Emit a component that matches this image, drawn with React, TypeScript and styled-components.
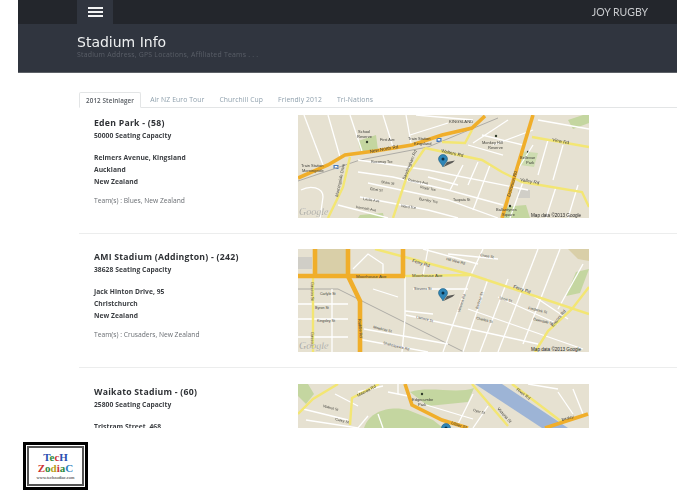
import React from "react";
import styled, { createGlobalStyle } from "styled-components";

const Global = createGlobalStyle`
  html, body { margin: 0; padding: 0; background: #fff; overflow: hidden; }
  body { font-family: "Open Sans", "Liberation Sans", sans-serif; }
`;
const Page = styled.div`
  width: 695px; height: 494px; display: flex; flex-direction: column; overflow: hidden;
  filter: blur(0.45px);
`;
const Header = styled.header`
  margin: 0 18px; width: 659px; height: 72px; background: #30353f;
  border-bottom: 1px solid #5d6167; box-sizing: content-box; flex: none;
`;
const TopBar = styled.div`
  height: 24px; background: #23262c; padding: 0 29px 0 59px; display: flex; align-items: center; justify-content: space-between;
`;
const MenuCell = styled.div`
  width: 36px; height: 24px; background: #30353f; display: flex; flex-direction: column; gap: 2px; align-items: center; justify-content: center;
`;
const MenuBar = styled.span`
  width: 15px; height: 2px; background: #f2f3f4;
`;
const Brand = styled.div`
  font-family: "Lato", sans-serif; font-size: 10.5px; color: #c9cbce;
`;
const TitleBlock = styled.div`
  padding: 9px 0 0 59px;
`;
const Title = styled.h1`
  margin: 0; font-family: "DejaVu Sans", sans-serif; font-weight: 400; font-size: 14px; line-height: 18px; color: #eef0f1;
`;
const Subtitle = styled.p`
  margin: -1px 0 0; font-size: 6.9px; line-height: 10px; color: #5a5f68; letter-spacing: 0.22px;
`;
const Content = styled.main`
  margin: 19px 18px 0 79px; flex: none; height: 336px; display: flex; flex-direction: column;
`;
const Tabs = styled.nav`
  display: flex; height: 15px; border-bottom: 1px solid #e3e5e6; flex: none; gap: 15px;
`;
const Tab = styled.div<{ $active?: boolean }>`
  box-sizing: border-box; line-height: 16px; letter-spacing: 0.1px; background: #fff;
  color: ${(p) => (p.$active ? "#555a60" : "#8fa0ad")};
  font-weight: ${(p) => (p.$active ? 600 : 400)};
  font-size: ${(p) => (p.$active ? "6.3px" : "6.8px")};
  ${(p) => (p.$active
    ? "border: 1px solid #e3e5e6; border-bottom-color: #fff; height: 16px; padding: 0 6px; border-radius: 2px 2px 0 0; margin-right: -6px;"
    : "height: 15px; padding: 0;")}
`;
const Pane = styled.div`
  flex: 1; overflow: hidden; padding-top: 7px;
`;
const Row = styled.article`
  display: flex; height: 118px; margin-bottom: 15.3px; border-bottom: 1px solid #eceded;
  &:last-child { border-bottom: 0; }
`;
const Info = styled.div`
  width: 204px; margin-left: 15px; padding-top: 2px; flex: none; color: #33363a;
`;
const Name = styled.h2`
  margin: 0 0 1px; font-size: 8.7px; line-height: 12px; font-weight: 700; color: #2f3236; letter-spacing: 0.25px;
`;
const Detail = styled.div<{ $gap?: number }>`
  font-size: 6.7px; font-weight: 700; line-height: 12px; color: #3a3d41; margin-top: ${(p) => p.$gap ?? 0}px; white-space: nowrap; letter-spacing: 0.05px;
`;
const TeamLine = styled.div`
  margin-top: 7px; font-size: 6.7px; line-height: 12px; color: #6a6e73;
`;
const MapFrame = styled.div<{ $h: number }>`
  width: 291px; height: ${(p) => p.$h}px; flex: none; overflow: hidden; background: #e6e1d1;
  svg { display: block; }
`;
const LogoArea = styled.div`
  margin: 14px 0 0 23px; flex: none;
`;
const LogoOuter = styled.div`
  width: 65px; height: 48px; box-sizing: border-box; border: 3px solid #000; background: #fff; padding: 1px;
`;
const LogoInner = styled.div`
  width: 100%; height: 100%; box-sizing: border-box; border: 2px solid #555; background: #fff;
  display: flex; flex-direction: column; align-items: center; justify-content: center;
  font-family: "Liberation Serif", serif; font-weight: 700;
`;
const LogoLine = styled.div`
  font-size: 11px; line-height: 11px;
`;
const LogoUrl = styled.div`
  font-size: 4.4px; line-height: 7px; font-weight: 400; color: #111;
`;
const L = styled.span<{ $c: string }>`
  color: ${(p) => p.$c};
`;

type Label = { t: string; x: number; y: number; r?: number; s?: number };
type MapData = {
  h: number;
  base?: React.ReactNode;
  white: string[];
  grey?: string[];
  yellow: string[];
  orange: string[];
  orangeW: number;
  labels: Label[];
  pin: [number, number];
  foot: boolean;
};

const Pin = ({ x, y }: { x: number; y: number }) => (
  <g transform={`translate(${x} ${y})`}>
    <path d="M0.5 8 L4 3 L12 1.5 L9.5 3.8 Z" fill="#4a4a48" opacity="0.9" />
    <path d="M0 8 C-1 5 -4.5 3 -4.5 0 A4.5 4.5 0 0 1 4.5 0 C4.5 3 1 5 0 8 Z" fill="#2f86b8" stroke="#14506f" strokeWidth="0.5" />
    <circle cx="0" cy="0" r="1.5" fill="#0b2f45" />
  </g>
);

const Dot = ({ x, y }: { x: number; y: number }) => <circle cx={x} cy={y} r="1.2" fill="#2f3b2a" />;
const Station = ({ x, y }: { x: number; y: number }) => (
  <g>
    <rect x={x - 2.5} y={y - 2} width="5" height="4" fill="#3f77c0" />
    <rect x={x - 1.3} y={y - 1} width="2.6" height="1.6" fill="#fff" />
  </g>
);

const MapView = ({ d }: { d: MapData }) => (
  <MapFrame $h={d.h}>
    <svg width="291" height={d.h} viewBox={`0 0 291 ${d.h}`}>
      <rect width="291" height={d.h} fill="#e6e1d1" />
      {d.base}
      {(d.grey ?? []).map((p, i) => <path key={i} d={p} fill="none" stroke="#aeaca6" strokeWidth="1" />)}
      {d.white.map((p, i) => <path key={i} d={p} fill="none" stroke="#fff" strokeWidth="1.3" />)}
      {d.yellow.map((p, i) => <path key={i} d={p} fill="none" stroke="#f3e673" strokeWidth="2.4" />)}
      {d.orange.map((p, i) => <path key={i} d={p} fill="none" stroke="#f0ae2a" strokeWidth={d.orangeW} />)}
      {d.labels.map((l, i) => (
        <text key={i} x={l.x} y={l.y} fontFamily="Liberation Sans, sans-serif" fontSize={l.s ?? 4} fill="#3f3f3a"
          transform={l.r ? `rotate(${l.r} ${l.x} ${l.y})` : undefined}>{l.t}</text>
      ))}
      <Pin x={d.pin[0]} y={d.pin[1]} />
      {d.foot && (
        <>
          <text x="1" y="100" fontFamily="Liberation Serif, serif" fontStyle="italic" fontSize="10" fill="#8a8a85" stroke="#f2f0e8" strokeWidth="0.25">Google</text>
          <text x="233" y="102" fontFamily="Liberation Sans, sans-serif" fontSize="4.6" fill="#222">Map data ©2013 Google</text>
        </>
      )}
    </svg>
  </MapFrame>
);

const maps: MapData[] = [
  {
    h: 103,
    foot: true,
    orangeW: 3.6,
    pin: [145, 44],
    base: (
      <>
        <path d="M60 26 L78 20 L80 35 L63 38 Z" fill="#c4d6a0" />
        <path d="M222 36 L240 38 L236 52 L222 50 Z" fill="#cddcb0" />
        <path d="M270 5 L285 0 L291 0 L291 8 L275 14 Z" fill="#c4d6a0" />
        <path d="M205 92 L228 90 L232 103 L205 103 Z" fill="#c4d6a0" />
        <path d="M62 100 L85 98 L86 103 L60 103 Z" fill="#c4d6a0" />
        <path d="M220 75 L232 75 L232 83 L220 83 Z" fill="#d0cec7" />
        <Dot x={69} y={27} />
        <Dot x={198} y={21} />
        <Dot x={230} y={37} />
        <Dot x={212} y={91} />
        <Station x={141} y={25} />
        <Station x={38} y={52} />
      </>
    ),
    grey: ["M0 66 L62 45 L130 32 L200 3"],
    white: [
      "M6 0 L25 50", "M30 0 L42 42", "M52 0 L64 36", "M85 0 L95 32", "M108 0 L113 28", "M112 20 L150 8", "M118 0 L175 5",
      "M60 45 L130 55 L230 75", "M60 57 L95 62 L150 75 L205 90", "M70 68 L150 85 L200 103", "M62 82 L130 95 L160 103", "M40 90 L90 103",
      "M130 62 L160 70", "M165 50 L152 75", "M180 47 L170 70", "M192 50 L175 95", "M225 67 L212 103", "M258 72 L248 103", "M280 70 L270 103",
      "M3 75 C 12 70 25 72 25 82 L 22 103", "M175 28 L210 5", "M195 30 L235 15", "M235 30 L215 62", "M250 25 L240 60", "M265 30 L255 65", "M170 30 L205 40", "M240 5 L291 14", "M184 20 L225 30",
    ],
    yellow: [
      "M127 33 L184 45 L204 57 L224 67 L284 77 L291 92",
      "M127 33 L110 58 L95 103",
      "M234 22 L291 32",
      "M52 42 L45 72 L30 103",
      "M144 27 L167 28 L174 15",
    ],
    orange: [
      "M0 63 L30 50 L47 40 L77 36 L114 30 L144 20 L174 13 L187 1",
      "M235 0 L204 103",
    ],
    labels: [
      { t: "New North Rd", x: 72, y: 38, r: -10, s: 4.6 },
      { t: "Walters Rd", x: 143, y: 37, r: 13, s: 4.6 },
      { t: "Valley Rd", x: 222, y: 66, r: 10, s: 4.6 },
      { t: "View Rd", x: 254, y: 26, r: 11, s: 4.6 },
      { t: "Dominion Rd", x: 212, y: 82, r: -74, s: 4.6 },
      { t: "Sandringham Rd", x: 107, y: 65, r: -68, s: 4.2 },
      { t: "Morningside Drive", x: 40, y: 82, r: -78, s: 4.2 },
      { t: "KINGSLAND", x: 151, y: 8, s: 4.2 },
      { t: "School", x: 60, y: 18, s: 4 },
      { t: "Reserve", x: 59, y: 23, s: 4 },
      { t: "First Ave", x: 82, y: 26, s: 3.8 },
      { t: "Train Station", x: 110, y: 25, s: 4 },
      { t: "Kingsland", x: 116, y: 30, s: 4 },
      { t: "Train Station", x: 3, y: 52, s: 4 },
      { t: "Morningside", x: 4, y: 57, s: 4 },
      { t: "Monkey Hill", x: 184, y: 29, s: 4 },
      { t: "Reserve", x: 190, y: 34, s: 4 },
      { t: "Bellevue", x: 222, y: 44, s: 4 },
      { t: "Park", x: 228, y: 49, s: 4 },
      { t: "Ballantynes", x: 198, y: 96, s: 4 },
      { t: "Square", x: 204, y: 101, s: 4 },
      { t: "Rossmay Tce", x: 73, y: 48, s: 3.6 },
      { t: "Reimers Ave", x: 110, y: 66, r: 10, s: 3.6 },
      { t: "Royal Tce", x: 122, y: 73, r: 12, s: 3.6 },
      { t: "Burnley Tce", x: 121, y: 85, r: 10, s: 3.6 },
      { t: "Taupata St", x: 155, y: 86, s: 3.6 },
      { t: "Shaw St", x: 83, y: 68, r: 8, s: 3.6 },
      { t: "Ethel St", x: 72, y: 75, r: 8, s: 3.6 },
      { t: "Leslie Ave", x: 65, y: 85, r: 8, s: 3.6 },
      { t: "Ward Tce", x: 103, y: 92, r: 8, s: 3.6 },
      { t: "Kenneth Ave", x: 58, y: 93, r: 10, s: 3.6 },
    ],
  },
  {
    h: 103,
    foot: true,
    orangeW: 4.6,
    pin: [145, 44],
    base: (
      <>
        <rect x="19" y="0" width="30" height="25" fill="#d9cfa8" />
        <path d="M268 47 L278 23 L291 20 L282 44 Z" fill="#c4d6a0" />
        <path d="M270 0 L291 0 L291 12 L280 10 Z" fill="#d9cfa8" />
        <rect x="0" y="8" width="14" height="12" fill="#d0cec7" />
      </>
    ),
    grey: ["M0 40 L40 40 L166 103"],
    white: [
      "M115 40 L170 40", "M107 27 L107 70 L104 103", "M75 40 L100 48", "M107 62 L135 65", "M108 66 L240 95", "M0 55 L50 55", "M0 70 L50 70", "M0 88 L50 88",
      "M66 80 L150 95", "M60 90 L130 103", "M172 28 L145 103", "M190 30 L165 103", "M210 30 L182 103", "M240 0 L200 103", "M262 0 L225 95", "M285 15 L260 60",
      "M125 0 L180 15", "M150 5 L200 10", "M185 0 L172 28", "M170 60 L285 100", "M200 48 L260 75", "M225 40 L270 70", "M34 40 L34 103", "M130 0 L125 27", "M55 20 L70 5 L85 15 L85 27",
    ],
    yellow: [
      "M107 27 L174 26",
      "M77 0 L174 26 L291 65",
      "M15 27 L15 103",
      "M237 103 L250 82 L274 60 L291 38",
    ],
    orange: [
      "M0 27 L107 27",
      "M17 0 L17 27",
      "M50 0 L50 27 L62 52 L62 103",
      "M105 0 L105 27",
    ],
    labels: [
      { t: "Moorhouse Ave", x: 58, y: 28.5, s: 4.4 },
      { t: "Moorhouse Ave", x: 114, y: 28, s: 4.4 },
      { t: "Ferry Rd", x: 114, y: 13, r: 17, s: 4.6 },
      { t: "Ferry Rd", x: 215, y: 39, r: 18, s: 4.6 },
      { t: "Ensors Rd", x: 255, y: 78, r: -50, s: 4.4 },
      { t: "Ruddle Rd", x: 60, y: 70, r: 85, s: 4 },
      { t: "Gasson St", x: 13, y: 33, r: 90, s: 4 },
      { t: "Gasson", x: 13, y: 83, r: 90, s: 4 },
      { t: "Carlyle St", x: 22, y: 46, s: 3.6 },
      { t: "Byron St", x: 17, y: 60, s: 3.6 },
      { t: "Kingsley St", x: 19, y: 73, s: 3.6 },
      { t: "Stevens St", x: 116, y: 41, s: 3.6 },
      { t: "Lismore St", x: 118, y: 69, r: 14, s: 3.6 },
      { t: "Mowbray St", x: 75, y: 79, r: 14, s: 3.6 },
      { t: "Shakespeare Rd", x: 85, y: 95, r: 14, s: 3.6 },
      { t: "Short St", x: 201, y: 50, r: 14, s: 3.6 },
      { t: "Charles St", x: 178, y: 70, r: 14, s: 3.6 },
      { t: "Wilsons Rd", x: 162, y: 63, r: -72, s: 3.6 },
      { t: "Barbour St", x: 180, y: 60, r: -72, s: 3.6 },
      { t: "Frederick St", x: 230, y: 60, r: 14, s: 3.6 },
      { t: "Dawnside St", x: 235, y: 71, r: 14, s: 3.6 },
      { t: "Hill View Rd", x: 148, y: 11, r: 14, s: 3.6 },
      { t: "Cross St", x: 182, y: 7, r: 10, s: 3.6 },
    ],
  },
  {
    h: 44,
    foot: false,
    orangeW: 3.6,
    pin: [148, 44],
    base: (
      <>
        <path d="M0 0 L10 0 L16 10 L8 20 L0 12 Z" fill="#c4d6a0" />
        <path d="M66 44 C72 25 95 22 110 26 L135 36 L145 44 Z" fill="#c4d6a0" />
        <path d="M112 8 C130 2 160 10 176 4 L170 18 L130 22 Z" fill="#c4d6a0" />
        <path d="M177 0 L204 0 L270 44 L244 44 Z" fill="#9db4d6" />
        <Dot x={124} y={10} />
      </>
    ),
    white: [
      "M5 25 L50 36", "M8 36 L60 44", "M37 10 L60 22", "M60 8 L85 2", "M90 8 L110 12", "M125 20 L175 35", "M175 10 L160 40", "M190 22 L175 44", "M80 30 L85 44",
      "M230 0 L260 5", "M260 8 L275 30", "M275 5 L285 30", "M100 0 L100 10", "M60 44 L70 32",
    ],
    yellow: [
      "M0 30 L15 15 L40 0",
      "M52 41 L54 14 L81 0",
      "M174 0 L210 42",
      "M214 0 L264 38",
    ],
    orange: [
      "M107 0 L114 21 L144 36 L170 44",
      "M247 44 L290 30",
    ],
    labels: [
      { t: "Maeroa Rd", x: 60, y: 13, r: -28, s: 4.2 },
      { t: "River Rd", x: 218, y: 6, r: 37, s: 4.2 },
      { t: "Victoria St", x: 199, y: 25, r: 48, s: 4.2 },
      { t: "Edgecumbe", x: 114, y: 17, s: 4 },
      { t: "Park", x: 120, y: 22, s: 4 },
      { t: "Ulster St", x: 153, y: 40, r: 18, s: 4.2 },
      { t: "Dyer St", x: 175, y: 27, r: 15, s: 3.6 },
      { t: "Walnut St", x: 25, y: 23, r: 15, s: 3.6 },
      { t: "Carey St", x: 37, y: 36, r: 15, s: 3.6 },
      { t: "Bealey", x: 264, y: 37, r: -15, s: 4 },
    ],
  },
];

const stadiums = [
  { name: "Eden Park - (58)", seats: "50000 Seating Capacity", addr: ["Reimers Avenue, Kingsland", "Auckland", "New Zealand"], team: "Team(s) : Blues, New Zealand" },
  { name: "AMI Stadium (Addington) - (242)", seats: "38628 Seating Capacity", addr: ["Jack Hinton Drive, 95", "Christchurch", "New Zealand"], team: "Team(s) : Crusaders, New Zealand" },
  { name: "Waikato Stadium - (60)", seats: "25800 Seating Capacity", addr: ["Tristram Street, 468"], team: "" },
];

const tabs = ["2012 Steinlager", "Air NZ Euro Tour", "Churchill Cup", "Friendly 2012", "Tri-Nations"];

export default function App() {
  return (
    <Page>
      <Global />
      <Header>
        <TopBar>
          <MenuCell><MenuBar /><MenuBar /><MenuBar /></MenuCell>
          <Brand>JOY RUGBY</Brand>
        </TopBar>
        <TitleBlock>
          <Title>Stadium Info</Title>
          <Subtitle>Stadium Address, GPS Locations, Affiliated Teams . . .</Subtitle>
        </TitleBlock>
      </Header>
      <Content>
        <Tabs>
          {tabs.map((t, i) => <Tab key={t} $active={i === 0}>{t}</Tab>)}
        </Tabs>
        <Pane>
          {stadiums.map((s, i) => (
            <Row key={s.name}>
              <Info>
                <Name>{s.name}</Name>
                <Detail>{s.seats}</Detail>
                {s.addr.map((a, j) => <Detail key={a} $gap={j === 0 ? 10 : 0}>{a}</Detail>)}
                {s.team && <TeamLine>{s.team}</TeamLine>}
              </Info>
              <MapView d={maps[i]} />
            </Row>
          ))}
        </Pane>
      </Content>
      <LogoArea>
        <LogoOuter>
          <LogoInner>
            <LogoLine><L $c="#2b4fb0">T</L><L $c="#2d8a3c">e</L><L $c="#c33">c</L><L $c="#2b4fb0">H</L></LogoLine>
            <LogoLine><L $c="#c33">Z</L><L $c="#2d8a3c">o</L><L $c="#b8a020">d</L><L $c="#c33">i</L><L $c="#2d8a3c">a</L><L $c="#2b7fc0">C</L></LogoLine>
            <LogoUrl>www.techzodiac.com</LogoUrl>
          </LogoInner>
        </LogoOuter>
      </LogoArea>
    </Page>
  );
}
